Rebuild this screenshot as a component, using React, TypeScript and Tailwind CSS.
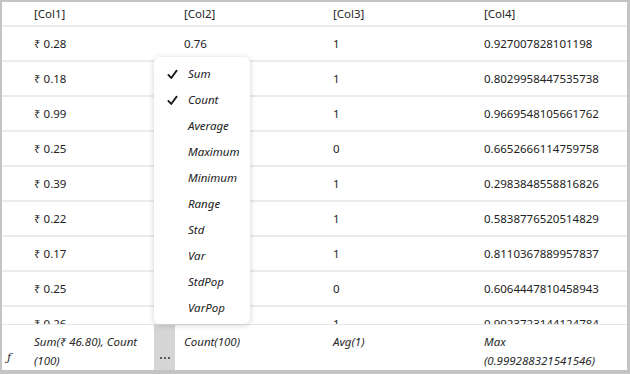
import { Fragment } from "react";

const rows = [
  ["₹ 0.28", "0.76", "1", "0.927007828101198"],
  ["₹ 0.18", "", "1", "0.8029958447535738"],
  ["₹ 0.99", "", "1", "0.9669548105661762"],
  ["₹ 0.25", "", "0", "0.6652666114759758"],
  ["₹ 0.39", "", "1", "0.2983848558816826"],
  ["₹ 0.22", "", "1", "0.5838776520514829"],
  ["₹ 0.17", "", "1", "0.8110367889957837"],
  ["₹ 0.25", "", "0", "0.6064447810458943"],
  ["₹ 0.26", "", "1", "0.9923723144124784"],
];

const items = [
  { label: "Sum", checked: true },
  { label: "Count", checked: true },
  { label: "Average" },
  { label: "Maximum" },
  { label: "Minimum" },
  { label: "Range" },
  { label: "Std" },
  { label: "Var" },
  { label: "StdPop" },
  { label: "VarPop" },
];

const cols = "grid grid-cols-[22px_150px_150px_150px_1fr]";

function Check() {
  return (
    <svg width="11" height="11" viewBox="0 0 12 12" className="text-[#1a1a1a]">
      <path d="M1.5 6.5 L4.6 9.8 L10.5 1.8" fill="none" stroke="currentColor" strokeWidth="2" strokeLinecap="round" strokeLinejoin="round" />
    </svg>
  );
}

export default function App() {
  return (
    <div
      className="relative h-[374px] w-[630px] overflow-hidden border-t-2 border-l-2 border-r-[3px] border-b-4 border-[#c4c4c4] bg-white text-[11.5px] text-[#222]"
      style={{ fontFamily: '"Noto Sans", "Open Sans", sans-serif' }}
    >
      <div className="flex h-full flex-col">
        <div className={`${cols} h-[25px] shrink-0 items-center border-b-2 border-[#ececec]`}>
          <div />
          <div className="pl-[10px]">[Col1]</div>
          <div className="pl-[10px]">[Col2]</div>
          <div className="pl-[9px]">[Col3]</div>
          <div className="pl-[10px]">[Col4]</div>
        </div>

        <div className="min-h-0 flex-1 overflow-hidden">
          {rows.map((r, i) => (
            <div key={i} className={`${cols} h-[35px] items-center border-b-2 border-[#ececec]`}>
              <div />
              <div className="pl-[10px]">{r[0]}</div>
              <div className="pl-[10px]">{r[1]}</div>
              <div className="pl-[9px]">{r[2]}</div>
              <div className="pl-[10px]">{r[3]}</div>
            </div>
          ))}
        </div>

        <div className="grid h-[46px] shrink-0 grid-cols-[22px_130px_21px_149px_150px_1fr] border-t border-[#e6e6e6] italic leading-[19px] text-[#2a2a2a]">
          <div className="flex items-end pb-[3px] pl-[5px]">
            <span style={{ fontFamily: '"DejaVu Serif", serif' }}>ƒ</span>
          </div>
          <div className="pt-[7px] pl-[10px]">Sum(₹ 46.80), Count (100)</div>
          <div className="flex items-end justify-center gap-[2px] bg-[#d5d5d5] pb-[11px]">
            <span className="h-[2px] w-[2px] rounded-full bg-[#333]" />
            <span className="h-[2px] w-[2px] rounded-full bg-[#333]" />
            <span className="h-[2px] w-[2px] rounded-full bg-[#333]" />
          </div>
          <div className="pt-[7px] pl-[9px]">Count(100)</div>
          <div className="pt-[7px] pl-[9px]">Avg(1)</div>
          <div className="pt-[7px] pl-[10px] pr-4">Max (0.999288321541546)</div>
        </div>
      </div>

      <div className="absolute left-[152px] top-[55px] w-[96px] rounded-md bg-white pt-[4px] pb-[3px] shadow-[0_1px_6px_rgba(0,0,0,0.18)]">
        {items.map((it) => (
          <Fragment key={it.label}>
            <div className="flex h-[26px] items-center">
              <div className="flex w-[34px] justify-center pl-[2px]">{it.checked ? <Check /> : null}</div>
              <span className="italic text-[#222]">{it.label}</span>
            </div>
          </Fragment>
        ))}
      </div>
    </div>
  );
}
